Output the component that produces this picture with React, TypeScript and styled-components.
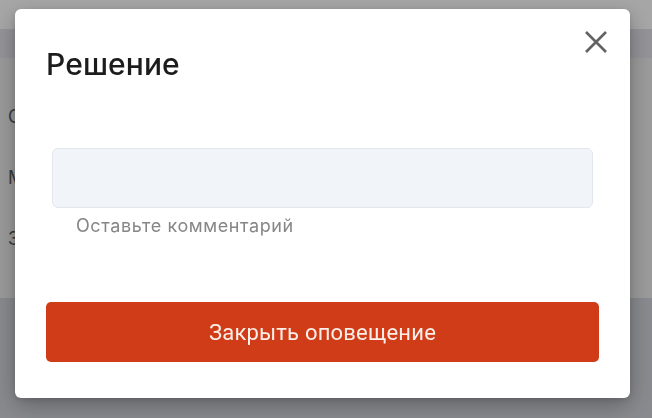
import React from "react";
import styled, { createGlobalStyle } from "styled-components";

const Global = createGlobalStyle`
  html, body { margin: 0; padding: 0; }
  body { width: 652px; height: 418px; overflow: hidden; font-family: Inter, "Noto Sans", sans-serif; }
`;

const Page = styled.div`
  width: 652px;
  height: 418px;
  display: flex;
  flex-direction: column;
  background: #d3d4db;
`;

const TopBar = styled.div`
  height: 29px;
  background: #ffffff;
`;

const SubBar = styled.div`
  height: 29px;
  background: #e2e2ea;
`;

const Card = styled.div`
  height: 240px;
  background: #eeeeee;
  display: flex;
  flex-direction: column;
  gap: 41px;
  padding: 49px 0 0 8px;
  box-sizing: border-box;
`;

const Row = styled.div`
  font-family: Inter, sans-serif;
  font-size: 18px;
  color: #5a5a5a;
  line-height: 20px;
`;

const Overlay = styled.div`
  position: fixed;
  inset: 0;
  background: rgba(0, 0, 0, 0.35);
`;

const Modal = styled.div`
  position: fixed;
  left: 15px;
  top: 9px;
  width: 615px;
  height: 389px;
  background: #ffffff;
  border-radius: 6px;
  box-shadow: 0 8px 24px rgba(0, 0, 0, 0.28), 0 2px 6px rgba(0, 0, 0, 0.12);
  box-sizing: border-box;
  padding: 0 31px;
  display: flex;
  flex-direction: column;
`;

const Header = styled.div`
  display: flex;
  justify-content: space-between;
  align-items: flex-start;
  padding-top: 37px;
  height: 94px;
  box-sizing: border-box;
`;

const Title = styled.h2`
  margin: 0;
  font-family: Inter, sans-serif;
  font-weight: 500;
  font-size: 30px;
  line-height: 36px;
  color: #1c1c1c;
  letter-spacing: 0.1px;
`;

const CloseButton = styled.button`
  border: none;
  background: none;
  padding: 0;
  margin: -18px -11px 0 0;
  width: 28px;
  height: 28px;
  display: flex;
  align-items: center;
  justify-content: center;
  cursor: pointer;
`;

const Field = styled.div`
  margin: 45px 6px 0;
  display: flex;
  flex-direction: column;
`;

const Input = styled.div`
  height: 60px;
  box-sizing: border-box;
  background: #f1f4f9;
  border: 1px solid #e2e6ee;
  border-radius: 6px;
`;

const Hint = styled.div`
  margin: 5px 0 0 24px;
  font-family: Inter, sans-serif;
  font-size: 18px;
  line-height: 26px;
  color: #868686;
  letter-spacing: 0.6px;
`;

const PrimaryButton = styled.button`
  margin-top: 63px;
  height: 60px;
  border: none;
  border-radius: 5px;
  background: #cf3c17;
  color: #fbefe9;
  font-family: Roboto, sans-serif;
  font-size: 22px;
  letter-spacing: 0.2px;
  cursor: pointer;
`;

export default function App() {
  return (
    <>
      <Global />
      <Page>
        <TopBar />
        <SubBar />
        <Card>
          <Row>Описание</Row>
          <Row>Место</Row>
          <Row>Заявитель</Row>
        </Card>
      </Page>
      <Overlay />
      <Modal>
        <Header>
          <Title>Решение</Title>
          <CloseButton aria-label="Закрыть">
            <svg width="24" height="24" viewBox="0 0 24 24">
              <path d="M2 2 L22 22 M22 2 L2 22" stroke="#636363" strokeWidth="2.6" strokeLinecap="butt" />
            </svg>
          </CloseButton>
        </Header>
        <Field>
          <Input />
          <Hint>Оставьте комментарий</Hint>
        </Field>
        <PrimaryButton>Закрыть оповещение</PrimaryButton>
      </Modal>
    </>
  );
}
